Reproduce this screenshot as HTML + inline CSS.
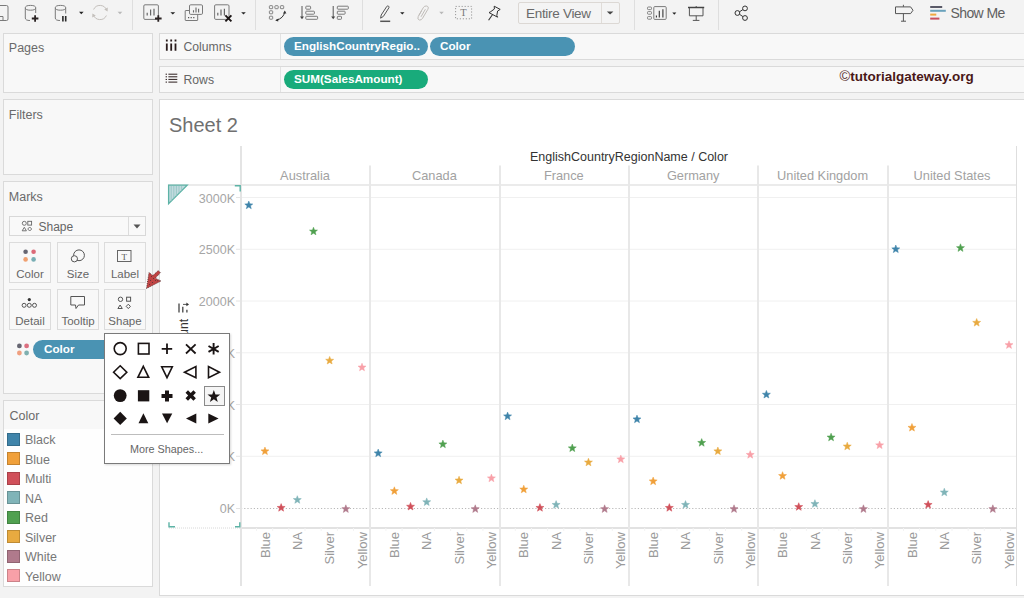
<!DOCTYPE html>
<html><head><meta charset="utf-8">
<style>
*{box-sizing:border-box;margin:0;padding:0}
html,body{width:1024px;height:598px;overflow:hidden;background:#f3f3f3;font-family:"Liberation Sans",sans-serif;color:#555;position:relative}
.a{position:absolute}
.t{position:absolute;white-space:nowrap;line-height:1}
.sep{position:absolute;top:0;width:1px;height:30px;background:#dedede}
.panel{position:absolute;background:#f8f8f8;border:1px solid #dadada}
.btn{position:absolute;border:1px solid #dcdcdc;background:#f8f8f8;width:42px;height:41px}
.btn .t{font-size:11.5px;color:#666;width:100%;text-align:center;left:0;top:26px}
.pill{position:absolute;border-radius:10px;color:#fff;font-weight:bold;font-size:11.7px;line-height:17.6px;height:19px;padding-left:10px;white-space:nowrap}
.sw{position:absolute;left:7px;width:13px;height:13px;box-shadow:inset 0 0 0 1px rgba(0,0,0,0.18)}
.lg{position:absolute;left:25px;font-size:12.5px;color:#777;line-height:1;white-space:nowrap}
svg{position:absolute;overflow:visible}
.ch{top:170px;font-size:12.8px;color:#a2a2a2;text-align:center}
.xl{top:532px;font-size:13px;color:#9a9a9a;transform-origin:0 0;transform:rotate(-90deg) translate(-100%,-50%);text-align:right}
.yl{left:135px;width:100px;text-align:right;font-size:12.5px;color:#a6a6a6}
</style></head><body>

<!-- toolbar -->
<div class="a" style="left:0;top:0;width:1024px;height:31px;background:#f3f3f3"></div>
<div class="sep" style="left:132px"></div>
<div class="sep" style="left:255px"></div>
<div class="sep" style="left:362px"></div>
<div class="sep" style="left:634px"></div>
<div class="sep" style="left:718px"></div>


<!-- toolbar icons -->
<svg style="left:0;top:0" width="1" height="1" fill="none" stroke="#7a7a7a" stroke-width="1">
<!-- save partial -->
<path d="M-2,5.5 H6.5 Q8,5.5 8,7 V19 Q8,20.5 6.5,20.5 H-2"/>
<path d="M-2,16.5 H3 V20.5"/>
<!-- cylinder + -->
<ellipse cx="30.5" cy="7.8" rx="5.2" ry="2.4"/>
<path d="M25.3,7.8 V18 Q25.3,20.5 30,20.5 M35.7,7.8 V13"/>
<path d="M31.8,18.5 H38.4 M35.1,15.2 V21.8" stroke="#2a2222" stroke-width="1.8"/>
<!-- cylinder pause -->
<ellipse cx="60.5" cy="7.8" rx="5.2" ry="2.4"/>
<path d="M55.3,7.8 V18 Q55.3,20.5 60,20.5 M65.7,7.8 V13.5"/>
<path d="M62.9,16 V21.5 M65.7,16 V21.5" stroke="#2a2a2a" stroke-width="1.6"/>
<!-- refresh -->
<path d="M93.6,9.5 A7,7 0 0 1 106.6,10.2 M106.4,15.5 A7,7 0 0 1 93.4,14.8" stroke="#c4c0bc" stroke-width="1"/>
<path d="M104.2,9.4 L107.6,11.4 L107.8,7.6 Z M95.8,15.6 L92.4,13.6 L92.2,17.4 Z" fill="#c4c0bc" stroke="none"/>
<!-- new worksheet -->
<rect x="143.8" y="4.8" width="14.6" height="14.6" rx="1.2"/>
<path d="M147.2,15.6 V12.8 M150.6,15.6 V9.6 M154,15.6 V8.8" stroke="#666" stroke-width="1.2"/>
<path d="M155,18.5 H161.6 M158.3,15.2 V21.8" stroke="#2a2222" stroke-width="1.8"/>
<!-- duplicate -->
<rect x="189.5" y="4.8" width="13" height="9.6" rx="1.2"/>
<path d="M193.5,12.6 V10.3 M196,12.6 V7.6 M198.6,12.6 V8.8" stroke="#666" stroke-width="1.1"/>
<path d="M189,10.5 H185.6 Q185.2,10.5 185.2,11 V20 Q185.2,20.5 185.7,20.5 H197.2 Q197.7,20.5 197.7,20 V14.6"/>
<path d="M188,17.6 H189.2 M190.6,17.6 H191.8 M193.2,17.6 H194.4" stroke="#555" stroke-width="1.2"/>
<!-- clear sheet -->
<rect x="214.6" y="4.8" width="14.4" height="14.6" rx="1.2"/>
<path d="M217.8,15.6 V12.8 M221,15.6 V9.6 M224.4,15.6 V8.8" stroke="#666" stroke-width="1.2"/>
<path d="M225.4,15.4 L231.4,21.4 M231.4,15.4 L225.4,21.4" stroke="#1a1414" stroke-width="1.9"/>
<!-- swap -->
<g stroke="#777" stroke-width="0.9">
<rect x="269.4" y="5.7" width="3.3" height="3" rx="0.6"/><rect x="274.9" y="5.7" width="3.3" height="3" rx="0.6"/><rect x="280.4" y="5.7" width="3.3" height="3" rx="0.6"/>
<rect x="269.4" y="10.8" width="3.3" height="3" rx="0.6"/><rect x="269.4" y="16.2" width="3.3" height="3" rx="0.6"/>
</g>
<path d="M276.2,20.2 Q283.5,18.5 284.8,11.8" stroke="#333" stroke-width="1"/>
<path d="M284.8,10.6 L283,13.6 L286.4,13.4 Z M275.2,20.6 L278.4,18.6 L278.2,21.6 Z" fill="#333" stroke="none"/>
<!-- sort asc -->
<path d="M302,6 V18" stroke="#555"/><path d="M300,16.4 L302,19.2 L304,16.4 Z" fill="#444" stroke="none"/>
<rect x="305.8" y="6.2" width="4.8" height="3" rx="0.7"/><rect x="305.8" y="11.2" width="8.6" height="3" rx="0.7"/><rect x="305.8" y="16.3" width="11.8" height="3" rx="0.7"/>
<!-- sort desc -->
<path d="M333.2,6 V18" stroke="#555"/><path d="M331.2,16.4 L333.2,19.2 L335.2,16.4 Z" fill="#444" stroke="none"/>
<rect x="337.3" y="6.2" width="11" height="3" rx="0.7"/><rect x="337.3" y="11.2" width="7.8" height="3" rx="0.7"/><rect x="337.3" y="16.3" width="4.2" height="3" rx="0.7"/>
<!-- pencil -->
<path d="M380.6,18.2 L381.2,15 L386.8,6.4 Q387.6,5.6 388.6,6.2 Q389.4,6.9 388.9,7.8 L383.4,16.4 Z" stroke="#555" stroke-width="1"/>
<path d="M380.2,21.3 H390.2" stroke="#555" stroke-width="1.5"/>
<!-- paperclip -->
<path d="M421.5,11 L418.2,16.6 Q417,19.4 419.4,20 Q421.4,20.4 422.6,18.2 L427.8,9.4 Q429.2,6.6 426.6,6 Q424.4,5.6 423.2,7.8 L418.8,15.4 M425.4,9.2 L421,16.8" stroke="#c0bcb8" stroke-width="1"/>
<!-- text box -->
<rect x="455.6" y="6.4" width="16" height="12.4" stroke="#999" stroke-dasharray="1.2,1.8"/>
<text x="463.5" y="16.3" font-family="Liberation Serif" font-size="10.5" fill="#777" stroke="none" text-anchor="middle">T</text>
<!-- pin -->
<path d="M494.2,6.2 L500.2,9.4 L497.6,11 L496.8,15.6 L497.6,17.2 L489,12.6 L490.8,11.6 L494.4,9 Z" stroke="#333" stroke-width="1"/>
<path d="M492.4,14.8 L488.6,20.2" stroke="#333" stroke-width="1.1"/>
<!-- cards -->
<g stroke="#777" stroke-width="0.9">
<rect x="647.5" y="7" width="4" height="2.6" rx="0.8"/><rect x="647.5" y="11.6" width="4" height="2.6" rx="0.8"/><rect x="647.5" y="16.6" width="4" height="2.6" rx="0.8"/>
</g>
<rect x="653.8" y="6.6" width="12.4" height="12.8" rx="1"/>
<path d="M656.4,17.6 V15.6 M659.3,17.6 V10.8 M662.9,17.6 V9.2" stroke="#333" stroke-width="1.1"/>
<!-- presentation -->
<path d="M688,7.5 H704.2" stroke="#444" stroke-width="1.5"/>
<path d="M689.4,8 V15.8 H703 V8" stroke="#555"/>
<path d="M696.2,15.8 V20.4 M692.8,20.4 H699.4 M696.2,6 V7" stroke="#555"/>
<!-- share -->
<circle cx="745" cy="8.4" r="2.4" stroke="#333"/><circle cx="737.4" cy="13" r="2.4" stroke="#333"/><circle cx="745" cy="18" r="2.4" stroke="#333"/>
<path d="M739.5,11.8 L742.9,9.6 M739.5,14.3 L742.9,16.6" stroke="#333"/>
<!-- sign -->
<path d="M903.4,4.8 V6.8 M903.4,13.7 V21.2 M901,21.2 H906" stroke="#555"/>
<path d="M895.5,6.9 H910.6 L913,10.25 L910.6,13.6 H895.5 Z" stroke="#555"/>
</svg>
<svg style="left:0;top:0" width="1" height="1">
<path d="M79,11.8 H83.6 L81.3,14.2 Z" fill="#222"/>
<path d="M117.6,11.8 H122.3 L120,14.2 Z" fill="#b8b8b8"/>
<path d="M170.4,12.3 H175.2 L172.8,14.6 Z" fill="#222"/>
<path d="M241.2,12.3 H245.8 L243.5,14.6 Z" fill="#222"/>
<path d="M400.1,12.3 H404.5 L402.3,14.5 Z" fill="#222"/>
<path d="M439.2,11.8 H443.8 L441.5,14.2 Z" fill="#b8b8b8"/>
<path d="M672.3,12.6 H676.3 L674.3,14.8 Z" fill="#222"/>
<rect x="930.2" y="6" width="12" height="2" fill="#5a5a68"/>
<rect x="930.2" y="9.8" width="15.6" height="2" fill="#6aa2bc"/>
<rect x="930.2" y="13.6" width="6.1" height="2" fill="#f0a840"/>
<rect x="930.2" y="17.6" width="9.2" height="2" fill="#c85060"/>
</svg>
<div class="a" style="left:518px;top:2px;width:102px;height:22px;border:1px solid #dcd8d4;border-radius:2px;background:#f4f4f4"></div>
<div class="a" style="left:601px;top:3px;width:1px;height:20px;background:#e0dcd8"></div>
<svg style="left:0;top:0" width="1" height="1"><path d="M606.8,11.4 H613.4 L610.1,14.6 Z" fill="#444"/></svg>
<div class="t" style="left:526px;top:6.5px;font-size:13.5px;letter-spacing:-0.3px;color:#6a6a6a">Entire View</div>
<div class="t" style="left:950.5px;top:5.5px;font-size:14px;letter-spacing:-0.6px;color:#606060">Show Me</div>

<!-- left panels -->
<div class="panel" style="left:3px;top:33px;width:150px;height:60px"><div class="t" style="left:4.8px;top:8px;font-size:12.5px;color:#6a6a6a">Pages</div></div>
<div class="panel" style="left:3px;top:99px;width:150px;height:76px"><div class="t" style="left:4.8px;top:8.5px;font-size:12.5px;color:#6a6a6a">Filters</div></div>
<div class="panel" style="left:3px;top:181px;width:150px;height:213px"><div class="t" style="left:4.8px;top:9px;font-size:12.5px;color:#6a6a6a">Marks</div></div>
<!-- marks dropdown -->
<div class="a" style="left:9px;top:216px;width:137px;height:20px;border:1px solid #d8d8d8;background:#f9f9f9"></div>
<div class="a" style="left:128px;top:217px;width:1px;height:18px;background:#dcdcdc"></div>
<svg style="left:0;top:0" width="1" height="1"><path d="M133.5,224.5 L140.5,224.5 L137,228.5 Z" fill="#555"/></svg>
<svg style="left:1px;top:0" width="1" height="1" fill="none" stroke="#666" stroke-width="0.9">
<circle cx="23.3" cy="223.3" r="2"/><rect x="26.8" y="221.3" width="3.8" height="3.8"/>
<path d="M21.2,230.8 L23.3,227.3 L25.4,230.8 Z"/><path d="M28.7,227 L30.7,229 L28.7,231 L26.7,229 Z"/>
</svg>
<div class="t" style="left:38.5px;top:220.5px;font-size:12px;color:#666">Shape</div>
<!-- mark buttons -->
<div class="btn" style="left:9px;top:242px"><div class="t">Color</div></div>
<div class="btn" style="left:57px;top:242px"><div class="t">Size</div></div>
<div class="btn" style="left:104px;top:242px"><div class="t">Label</div></div>
<div class="btn" style="left:9px;top:289px"><div class="t">Detail</div></div>
<div class="btn" style="left:57px;top:289px"><div class="t">Tooltip</div></div>
<div class="btn" style="left:104px;top:289px"><div class="t">Shape</div></div>
<svg style="left:0;top:0" width="1" height="1">
<circle cx="25.6" cy="251.8" r="2.3" fill="#666672"/><circle cx="33.6" cy="251.8" r="2.3" fill="#dc6a78"/>
<circle cx="25.6" cy="259.4" r="2.3" fill="#f0a070"/><circle cx="33.6" cy="259.4" r="2.3" fill="#78aeb4"/>
<g fill="none" stroke="#555" stroke-width="1">
<circle cx="79" cy="255.3" r="5.4"/><circle cx="74.4" cy="258.8" r="3.1" fill="#f8f8f8"/>
<rect x="117.5" y="250.5" width="13.5" height="11" stroke="#666"/>
<circle cx="24.1" cy="305.3" r="2"/><circle cx="29.3" cy="305.3" r="2"/><circle cx="34.5" cy="305.3" r="2"/>
<path d="M70.8,296.5 H84.5 V305 H78.5 L76,308.5 L75.5,305 H70.8 Z"/>
<circle cx="120.5" cy="299.3" r="2.2"/><rect x="126.6" y="297.2" width="4" height="4"/>
<path d="M117.9,308.5 L120.1,305 L122.3,308.5 Z"/><path d="M128.3,304.2 L130.4,306.4 L128.3,308.6 L126.2,306.4 Z"/>
</g>
<circle cx="29.3" cy="299.6" r="1.6" fill="#333"/>
<text x="124.2" y="259.8" font-family="Liberation Serif" font-size="9" fill="#555" text-anchor="middle">T</text>
</svg>
<!-- color pill on marks -->
<svg style="left:0;top:0" width="1" height="1">
<circle cx="19.4" cy="345.9" r="2.4" fill="#666672"/><circle cx="26.6" cy="345.9" r="2.4" fill="#dc7080"/>
<circle cx="19.4" cy="353" r="2.4" fill="#f0a080"/><circle cx="26.6" cy="353" r="2.4" fill="#80b0b0"/>
</svg>
<div class="pill" style="left:33px;top:340px;width:95px;background:#4a93b3;padding-left:11px">Color</div>
<div class="panel" style="left:3px;top:400px;width:150px;height:187px;background:#fefefe"></div>
<div class="a" style="left:4px;top:401px;width:148px;height:28px;background:#f8f8f8"></div>
<div class="t" style="left:9.5px;top:409.5px;font-size:12.5px;color:#6a6a6a">Color</div>
<div class="sw" style="top:432.5px;background:#3f84aa"></div><div class="lg" style="top:434.0px">Black</div><div class="sw" style="top:452.0px;background:#f0a03a"></div><div class="lg" style="top:453.5px">Blue</div><div class="sw" style="top:471.5px;background:#d0505a"></div><div class="lg" style="top:473.0px">Multi</div><div class="sw" style="top:491.0px;background:#80b4b8"></div><div class="lg" style="top:492.5px">NA</div><div class="sw" style="top:510.5px;background:#50a050"></div><div class="lg" style="top:512.0px">Red</div><div class="sw" style="top:530.0px;background:#e8aa40"></div><div class="lg" style="top:531.5px">Silver</div><div class="sw" style="top:549.5px;background:#b07a8c"></div><div class="lg" style="top:551.0px">White</div><div class="sw" style="top:569.0px;background:#f8a0a8"></div><div class="lg" style="top:570.5px">Yellow</div>

<!-- shelves -->
<div class="panel" style="left:159px;top:33px;width:865px;height:27px;border-right:none"></div>
<div class="panel" style="left:159px;top:66px;width:865px;height:27px;border-right:none"></div>
<div class="a" style="left:280px;top:34px;width:1px;height:25px;background:#e2e2e2"></div>
<div class="a" style="left:280px;top:67px;width:1px;height:25px;background:#e2e2e2"></div>
<svg style="left:0;top:0" width="1" height="1">
<path d="M166.8,43.4 V50.8 M171.2,43.4 V50.8 M175.5,43.4 V50.8 M166.8,39.6 V41.6 M171.2,39.6 V41.6 M175.5,39.6 V41.6" stroke="#2a1c1c" stroke-width="1.8"/>
<path d="M168.4,74.2 H177.3 M168.4,76.8 H177.3 M168.4,79.4 H177.3 M168.4,82.1 H177.3 M165.6,74.2 H167 M165.6,76.8 H167 M165.6,79.4 H167 M165.6,82.1 H167" stroke="#2a1c1c" stroke-width="1"/>
</svg>
<div class="t" style="left:183.5px;top:41px;font-size:12.2px;color:#666">Columns</div>
<div class="t" style="left:183.5px;top:74px;font-size:12.2px;color:#666">Rows</div>
<div class="pill" style="left:284px;top:37px;width:144px;background:#4a93b3">EnglishCountryRegio..</div>
<div class="pill" style="left:430px;top:37px;width:145px;background:#4a93b3">Color</div>
<div class="pill" style="left:284px;top:70px;width:144px;background:#19ab7b">SUM(SalesAmount)</div>
<div class="t" style="left:839.5px;top:68.5px;font-size:13.5px;font-weight:bold;color:#4a1818"><span style="font-weight:normal;font-size:14.5px;color:#5a3030">©</span>tutorialgateway.org</div>

<!-- sheet -->
<div class="a" style="left:159px;top:99px;width:865px;height:497px;background:#fff;border:1px solid #dadada;border-right:none"></div>
<div class="t" style="left:169px;top:114.5px;font-size:20px;color:#707070">Sheet 2</div>
<svg class="a" style="left:0;top:0" width="1024" height="598" viewBox="0 0 1024 598">
<line x1="242" y1="197.5" x2="1016" y2="197.5" stroke="#f0f0f0" stroke-width="1"/>
<line x1="236" y1="197.5" x2="240" y2="197.5" stroke="#e4e4e4" stroke-width="1"/>
<line x1="242" y1="249.25" x2="1016" y2="249.25" stroke="#f0f0f0" stroke-width="1"/>
<line x1="236" y1="249.25" x2="240" y2="249.25" stroke="#e4e4e4" stroke-width="1"/>
<line x1="242" y1="301" x2="1016" y2="301" stroke="#f0f0f0" stroke-width="1"/>
<line x1="236" y1="301" x2="240" y2="301" stroke="#e4e4e4" stroke-width="1"/>
<line x1="242" y1="352.75" x2="1016" y2="352.75" stroke="#f0f0f0" stroke-width="1"/>
<line x1="236" y1="352.75" x2="240" y2="352.75" stroke="#e4e4e4" stroke-width="1"/>
<line x1="242" y1="404.5" x2="1016" y2="404.5" stroke="#f0f0f0" stroke-width="1"/>
<line x1="236" y1="404.5" x2="240" y2="404.5" stroke="#e4e4e4" stroke-width="1"/>
<line x1="242" y1="456.25" x2="1016" y2="456.25" stroke="#f0f0f0" stroke-width="1"/>
<line x1="236" y1="456.25" x2="240" y2="456.25" stroke="#e4e4e4" stroke-width="1"/>
<line x1="241" y1="508.5" x2="1017" y2="508.5" stroke="#b8b8b8" stroke-width="1" stroke-dasharray="1.2,2"/>
<line x1="236" y1="508.5" x2="240" y2="508.5" stroke="#e4e4e4" stroke-width="1"/>
<line x1="168" y1="185" x2="1017" y2="185" stroke="#ebebeb" stroke-width="2"/>
<line x1="241" y1="528" x2="1017" y2="528" stroke="#e2e2e2" stroke-width="2"/>
<line x1="169" y1="528" x2="240" y2="528" stroke="#d8d8d8" stroke-width="1" stroke-dasharray="1,1"/>
<line x1="241" y1="146" x2="241" y2="586" stroke="#e4e4e4" stroke-width="2"/>
<line x1="1016.5" y1="146" x2="1016.5" y2="586" stroke="#dedede" stroke-width="1"/>
<line x1="370" y1="165.5" x2="370" y2="586" stroke="#e8e8e8" stroke-width="2"/>
<line x1="500" y1="165.5" x2="500" y2="586" stroke="#e8e8e8" stroke-width="2"/>
<line x1="629" y1="165.5" x2="629" y2="586" stroke="#e8e8e8" stroke-width="2"/>
<line x1="758" y1="165.5" x2="758" y2="586" stroke="#e8e8e8" stroke-width="2"/>
<line x1="888" y1="165.5" x2="888" y2="586" stroke="#e8e8e8" stroke-width="2"/>
<polygon points="168.6,185.2 187.2,185.2 168.6,203.6" fill="#c2dadf" stroke="#5db3a6" stroke-width="1.3"/>
<line x1="171.2" y1="186" x2="171.2" y2="201.0" stroke="#8fc5c0" stroke-width="0.8"/>
<line x1="173.8" y1="186" x2="173.8" y2="198.4" stroke="#8fc5c0" stroke-width="0.8"/>
<line x1="176.4" y1="186" x2="176.4" y2="195.8" stroke="#8fc5c0" stroke-width="0.8"/>
<line x1="179" y1="186" x2="179" y2="193.2" stroke="#8fc5c0" stroke-width="0.8"/>
<line x1="181.6" y1="186" x2="181.6" y2="190.6" stroke="#8fc5c0" stroke-width="0.8"/>
<path d="M234.8,185.7 H240.2 V191.4" fill="none" stroke="#5db3a6" stroke-width="1.4"/>
<path d="M169,522.3 V526.7 H175" fill="none" stroke="#5db3a6" stroke-width="1.4"/>
<path d="M235,526.7 H239.8 V522.3" fill="none" stroke="#5db3a6" stroke-width="1.4"/>
<path d="M179,303.4 V312.6 M182.8,306.7 V312.6 M186.9,309.7 V312.6" stroke="#444" stroke-width="1.3"/>
<path d="M183,304.4 H187" stroke="#444" stroke-width="0.9"/><path d="M186.4,302.6 L189,304.4 L186.4,306.2 Z" fill="#333"/>
<line x1="256.5" y1="528" x2="256.5" y2="531" stroke="#f3f3f3" stroke-width="1"/>
<line x1="272.7" y1="528" x2="272.7" y2="531" stroke="#f3f3f3" stroke-width="1"/>
<line x1="288.8" y1="528" x2="288.8" y2="531" stroke="#f3f3f3" stroke-width="1"/>
<line x1="305.0" y1="528" x2="305.0" y2="531" stroke="#f3f3f3" stroke-width="1"/>
<line x1="321.2" y1="528" x2="321.2" y2="531" stroke="#f3f3f3" stroke-width="1"/>
<line x1="337.4" y1="528" x2="337.4" y2="531" stroke="#f3f3f3" stroke-width="1"/>
<line x1="353.5" y1="528" x2="353.5" y2="531" stroke="#f3f3f3" stroke-width="1"/>
<line x1="385.9" y1="528" x2="385.9" y2="531" stroke="#f3f3f3" stroke-width="1"/>
<line x1="402.1" y1="528" x2="402.1" y2="531" stroke="#f3f3f3" stroke-width="1"/>
<line x1="418.2" y1="528" x2="418.2" y2="531" stroke="#f3f3f3" stroke-width="1"/>
<line x1="434.4" y1="528" x2="434.4" y2="531" stroke="#f3f3f3" stroke-width="1"/>
<line x1="450.6" y1="528" x2="450.6" y2="531" stroke="#f3f3f3" stroke-width="1"/>
<line x1="466.8" y1="528" x2="466.8" y2="531" stroke="#f3f3f3" stroke-width="1"/>
<line x1="482.9" y1="528" x2="482.9" y2="531" stroke="#f3f3f3" stroke-width="1"/>
<line x1="515.3" y1="528" x2="515.3" y2="531" stroke="#f3f3f3" stroke-width="1"/>
<line x1="531.5" y1="528" x2="531.5" y2="531" stroke="#f3f3f3" stroke-width="1"/>
<line x1="547.6" y1="528" x2="547.6" y2="531" stroke="#f3f3f3" stroke-width="1"/>
<line x1="563.8" y1="528" x2="563.8" y2="531" stroke="#f3f3f3" stroke-width="1"/>
<line x1="580.0" y1="528" x2="580.0" y2="531" stroke="#f3f3f3" stroke-width="1"/>
<line x1="596.2" y1="528" x2="596.2" y2="531" stroke="#f3f3f3" stroke-width="1"/>
<line x1="612.3" y1="528" x2="612.3" y2="531" stroke="#f3f3f3" stroke-width="1"/>
<line x1="644.7" y1="528" x2="644.7" y2="531" stroke="#f3f3f3" stroke-width="1"/>
<line x1="660.9" y1="528" x2="660.9" y2="531" stroke="#f3f3f3" stroke-width="1"/>
<line x1="677.0" y1="528" x2="677.0" y2="531" stroke="#f3f3f3" stroke-width="1"/>
<line x1="693.2" y1="528" x2="693.2" y2="531" stroke="#f3f3f3" stroke-width="1"/>
<line x1="709.4" y1="528" x2="709.4" y2="531" stroke="#f3f3f3" stroke-width="1"/>
<line x1="725.5" y1="528" x2="725.5" y2="531" stroke="#f3f3f3" stroke-width="1"/>
<line x1="741.7" y1="528" x2="741.7" y2="531" stroke="#f3f3f3" stroke-width="1"/>
<line x1="774.1" y1="528" x2="774.1" y2="531" stroke="#f3f3f3" stroke-width="1"/>
<line x1="790.3" y1="528" x2="790.3" y2="531" stroke="#f3f3f3" stroke-width="1"/>
<line x1="806.4" y1="528" x2="806.4" y2="531" stroke="#f3f3f3" stroke-width="1"/>
<line x1="822.6" y1="528" x2="822.6" y2="531" stroke="#f3f3f3" stroke-width="1"/>
<line x1="838.8" y1="528" x2="838.8" y2="531" stroke="#f3f3f3" stroke-width="1"/>
<line x1="855.0" y1="528" x2="855.0" y2="531" stroke="#f3f3f3" stroke-width="1"/>
<line x1="871.1" y1="528" x2="871.1" y2="531" stroke="#f3f3f3" stroke-width="1"/>
<line x1="903.5" y1="528" x2="903.5" y2="531" stroke="#f3f3f3" stroke-width="1"/>
<line x1="919.6" y1="528" x2="919.6" y2="531" stroke="#f3f3f3" stroke-width="1"/>
<line x1="935.8" y1="528" x2="935.8" y2="531" stroke="#f3f3f3" stroke-width="1"/>
<line x1="952.0" y1="528" x2="952.0" y2="531" stroke="#f3f3f3" stroke-width="1"/>
<line x1="968.2" y1="528" x2="968.2" y2="531" stroke="#f3f3f3" stroke-width="1"/>
<line x1="984.3" y1="528" x2="984.3" y2="531" stroke="#f3f3f3" stroke-width="1"/>
<line x1="1000.5" y1="528" x2="1000.5" y2="531" stroke="#f3f3f3" stroke-width="1"/>
<polygon points="248.79,201.10 249.85,203.84 252.78,204.00 250.50,205.86 251.26,208.70 248.79,207.10 246.32,208.70 247.08,205.86 244.79,204.00 247.73,203.84" fill="#3f84aa" stroke="#3f84aa" stroke-width="0.5" stroke-linejoin="miter"/>
<polygon points="264.96,447.00 266.02,449.74 268.96,449.90 266.67,451.76 267.43,454.60 264.96,453.00 262.49,454.60 263.25,451.76 260.97,449.90 263.90,449.74" fill="#f0a03a" stroke="#f0a03a" stroke-width="0.5" stroke-linejoin="miter"/>
<polygon points="281.14,503.60 282.20,506.34 285.13,506.50 282.85,508.36 283.61,511.20 281.14,509.60 278.67,511.20 279.43,508.36 277.14,506.50 280.08,506.34" fill="#d0505a" stroke="#d0505a" stroke-width="0.5" stroke-linejoin="miter"/>
<polygon points="297.31,495.70 298.37,498.44 301.31,498.60 299.02,500.46 299.78,503.30 297.31,501.70 294.84,503.30 295.60,500.46 293.32,498.60 296.25,498.44" fill="#80b4b8" stroke="#80b4b8" stroke-width="0.5" stroke-linejoin="miter"/>
<polygon points="313.49,227.20 314.55,229.94 317.48,230.10 315.20,231.96 315.96,234.80 313.49,233.20 311.02,234.80 311.78,231.96 309.49,230.10 312.43,229.94" fill="#50a050" stroke="#50a050" stroke-width="0.5" stroke-linejoin="miter"/>
<polygon points="329.66,356.40 330.72,359.14 333.66,359.30 331.37,361.16 332.13,364.00 329.66,362.40 327.19,364.00 327.95,361.16 325.67,359.30 328.60,359.14" fill="#e8aa40" stroke="#e8aa40" stroke-width="0.5" stroke-linejoin="miter"/>
<polygon points="345.84,504.80 346.90,507.54 349.83,507.70 347.55,509.56 348.31,512.40 345.84,510.80 343.37,512.40 344.13,509.56 341.84,507.70 344.78,507.54" fill="#b07a8c" stroke="#b07a8c" stroke-width="0.5" stroke-linejoin="miter"/>
<polygon points="362.01,363.20 363.07,365.94 366.01,366.10 363.72,367.96 364.48,370.80 362.01,369.20 359.54,370.80 360.30,367.96 358.02,366.10 360.95,365.94" fill="#f8a0a8" stroke="#f8a0a8" stroke-width="0.5" stroke-linejoin="miter"/>
<polygon points="378.19,449.10 379.25,451.84 382.18,452.00 379.90,453.86 380.66,456.70 378.19,455.10 375.72,456.70 376.48,453.86 374.19,452.00 377.13,451.84" fill="#3f84aa" stroke="#3f84aa" stroke-width="0.5" stroke-linejoin="miter"/>
<polygon points="394.36,486.80 395.42,489.54 398.36,489.70 396.07,491.56 396.83,494.40 394.36,492.80 391.89,494.40 392.65,491.56 390.37,489.70 393.30,489.54" fill="#f0a03a" stroke="#f0a03a" stroke-width="0.5" stroke-linejoin="miter"/>
<polygon points="410.54,502.40 411.60,505.14 414.53,505.30 412.25,507.16 413.01,510.00 410.54,508.40 408.07,510.00 408.83,507.16 406.54,505.30 409.48,505.14" fill="#d0505a" stroke="#d0505a" stroke-width="0.5" stroke-linejoin="miter"/>
<polygon points="426.71,497.90 427.77,500.64 430.71,500.80 428.42,502.66 429.18,505.50 426.71,503.90 424.24,505.50 425.00,502.66 422.72,500.80 425.65,500.64" fill="#80b4b8" stroke="#80b4b8" stroke-width="0.5" stroke-linejoin="miter"/>
<polygon points="442.89,440.10 443.95,442.84 446.88,443.00 444.60,444.86 445.36,447.70 442.89,446.10 440.42,447.70 441.18,444.86 438.89,443.00 441.83,442.84" fill="#50a050" stroke="#50a050" stroke-width="0.5" stroke-linejoin="miter"/>
<polygon points="459.06,476.20 460.12,478.94 463.06,479.10 460.77,480.96 461.53,483.80 459.06,482.20 456.59,483.80 457.35,480.96 455.07,479.10 458.00,478.94" fill="#e8aa40" stroke="#e8aa40" stroke-width="0.5" stroke-linejoin="miter"/>
<polygon points="475.24,504.80 476.30,507.54 479.23,507.70 476.95,509.56 477.71,512.40 475.24,510.80 472.77,512.40 473.53,509.56 471.24,507.70 474.18,507.54" fill="#b07a8c" stroke="#b07a8c" stroke-width="0.5" stroke-linejoin="miter"/>
<polygon points="491.41,474.10 492.47,476.84 495.41,477.00 493.12,478.86 493.88,481.70 491.41,480.10 488.94,481.70 489.70,478.86 487.42,477.00 490.35,476.84" fill="#f8a0a8" stroke="#f8a0a8" stroke-width="0.5" stroke-linejoin="miter"/>
<polygon points="507.59,412.10 508.65,414.84 511.58,415.00 509.30,416.86 510.06,419.70 507.59,418.10 505.12,419.70 505.88,416.86 503.59,415.00 506.53,414.84" fill="#3f84aa" stroke="#3f84aa" stroke-width="0.5" stroke-linejoin="miter"/>
<polygon points="523.76,485.20 524.82,487.94 527.76,488.10 525.47,489.96 526.23,492.80 523.76,491.20 521.29,492.80 522.05,489.96 519.77,488.10 522.70,487.94" fill="#f0a03a" stroke="#f0a03a" stroke-width="0.5" stroke-linejoin="miter"/>
<polygon points="539.94,503.60 541.00,506.34 543.93,506.50 541.65,508.36 542.41,511.20 539.94,509.60 537.47,511.20 538.23,508.36 535.94,506.50 538.88,506.34" fill="#d0505a" stroke="#d0505a" stroke-width="0.5" stroke-linejoin="miter"/>
<polygon points="556.11,500.60 557.17,503.34 560.11,503.50 557.82,505.36 558.58,508.20 556.11,506.60 553.64,508.20 554.40,505.36 552.12,503.50 555.05,503.34" fill="#80b4b8" stroke="#80b4b8" stroke-width="0.5" stroke-linejoin="miter"/>
<polygon points="572.29,444.00 573.35,446.74 576.28,446.90 574.00,448.76 574.76,451.60 572.29,450.00 569.82,451.60 570.58,448.76 568.29,446.90 571.23,446.74" fill="#50a050" stroke="#50a050" stroke-width="0.5" stroke-linejoin="miter"/>
<polygon points="588.46,458.20 589.52,460.94 592.46,461.10 590.17,462.96 590.93,465.80 588.46,464.20 585.99,465.80 586.75,462.96 584.47,461.10 587.40,460.94" fill="#e8aa40" stroke="#e8aa40" stroke-width="0.5" stroke-linejoin="miter"/>
<polygon points="604.64,504.80 605.70,507.54 608.63,507.70 606.35,509.56 607.11,512.40 604.64,510.80 602.17,512.40 602.93,509.56 600.64,507.70 603.58,507.54" fill="#b07a8c" stroke="#b07a8c" stroke-width="0.5" stroke-linejoin="miter"/>
<polygon points="620.81,455.10 621.87,457.84 624.81,458.00 622.52,459.86 623.28,462.70 620.81,461.10 618.34,462.70 619.10,459.86 616.82,458.00 619.75,457.84" fill="#f8a0a8" stroke="#f8a0a8" stroke-width="0.5" stroke-linejoin="miter"/>
<polygon points="636.99,415.10 638.05,417.84 640.98,418.00 638.70,419.86 639.46,422.70 636.99,421.10 634.52,422.70 635.28,419.86 632.99,418.00 635.93,417.84" fill="#3f84aa" stroke="#3f84aa" stroke-width="0.5" stroke-linejoin="miter"/>
<polygon points="653.16,477.10 654.22,479.84 657.16,480.00 654.87,481.86 655.63,484.70 653.16,483.10 650.69,484.70 651.45,481.86 649.17,480.00 652.10,479.84" fill="#f0a03a" stroke="#f0a03a" stroke-width="0.5" stroke-linejoin="miter"/>
<polygon points="669.34,503.60 670.40,506.34 673.33,506.50 671.05,508.36 671.81,511.20 669.34,509.60 666.87,511.20 667.63,508.36 665.34,506.50 668.28,506.34" fill="#d0505a" stroke="#d0505a" stroke-width="0.5" stroke-linejoin="miter"/>
<polygon points="685.51,500.60 686.57,503.34 689.51,503.50 687.22,505.36 687.98,508.20 685.51,506.60 683.04,508.20 683.80,505.36 681.52,503.50 684.45,503.34" fill="#80b4b8" stroke="#80b4b8" stroke-width="0.5" stroke-linejoin="miter"/>
<polygon points="701.69,438.60 702.75,441.34 705.68,441.50 703.40,443.36 704.16,446.20 701.69,444.60 699.22,446.20 699.98,443.36 697.69,441.50 700.63,441.34" fill="#50a050" stroke="#50a050" stroke-width="0.5" stroke-linejoin="miter"/>
<polygon points="717.86,447.00 718.92,449.74 721.86,449.90 719.57,451.76 720.33,454.60 717.86,453.00 715.39,454.60 716.15,451.76 713.87,449.90 716.80,449.74" fill="#e8aa40" stroke="#e8aa40" stroke-width="0.5" stroke-linejoin="miter"/>
<polygon points="734.04,504.80 735.10,507.54 738.03,507.70 735.75,509.56 736.51,512.40 734.04,510.80 731.57,512.40 732.33,509.56 730.04,507.70 732.98,507.54" fill="#b07a8c" stroke="#b07a8c" stroke-width="0.5" stroke-linejoin="miter"/>
<polygon points="750.21,450.60 751.27,453.34 754.21,453.50 751.92,455.36 752.68,458.20 750.21,456.60 747.74,458.20 748.50,455.36 746.22,453.50 749.15,453.34" fill="#f8a0a8" stroke="#f8a0a8" stroke-width="0.5" stroke-linejoin="miter"/>
<polygon points="766.39,390.40 767.45,393.14 770.38,393.30 768.10,395.16 768.86,398.00 766.39,396.40 763.92,398.00 764.68,395.16 762.39,393.30 765.33,393.14" fill="#3f84aa" stroke="#3f84aa" stroke-width="0.5" stroke-linejoin="miter"/>
<polygon points="782.56,471.70 783.62,474.44 786.56,474.60 784.27,476.46 785.03,479.30 782.56,477.70 780.09,479.30 780.85,476.46 778.57,474.60 781.50,474.44" fill="#f0a03a" stroke="#f0a03a" stroke-width="0.5" stroke-linejoin="miter"/>
<polygon points="798.74,502.70 799.80,505.44 802.73,505.60 800.45,507.46 801.21,510.30 798.74,508.70 796.27,510.30 797.03,507.46 794.74,505.60 797.68,505.44" fill="#d0505a" stroke="#d0505a" stroke-width="0.5" stroke-linejoin="miter"/>
<polygon points="814.91,499.70 815.97,502.44 818.91,502.60 816.62,504.46 817.38,507.30 814.91,505.70 812.44,507.30 813.20,504.46 810.92,502.60 813.85,502.44" fill="#80b4b8" stroke="#80b4b8" stroke-width="0.5" stroke-linejoin="miter"/>
<polygon points="831.09,433.20 832.15,435.94 835.08,436.10 832.80,437.96 833.56,440.80 831.09,439.20 828.62,440.80 829.38,437.96 827.09,436.10 830.03,435.94" fill="#50a050" stroke="#50a050" stroke-width="0.5" stroke-linejoin="miter"/>
<polygon points="847.26,442.20 848.32,444.94 851.26,445.10 848.97,446.96 849.73,449.80 847.26,448.20 844.79,449.80 845.55,446.96 843.27,445.10 846.20,444.94" fill="#e8aa40" stroke="#e8aa40" stroke-width="0.5" stroke-linejoin="miter"/>
<polygon points="863.44,504.80 864.50,507.54 867.43,507.70 865.15,509.56 865.91,512.40 863.44,510.80 860.97,512.40 861.73,509.56 859.44,507.70 862.38,507.54" fill="#b07a8c" stroke="#b07a8c" stroke-width="0.5" stroke-linejoin="miter"/>
<polygon points="879.61,441.00 880.67,443.74 883.61,443.90 881.32,445.76 882.08,448.60 879.61,447.00 877.14,448.60 877.90,445.76 875.62,443.90 878.55,443.74" fill="#f8a0a8" stroke="#f8a0a8" stroke-width="0.5" stroke-linejoin="miter"/>
<polygon points="895.79,245.00 896.85,247.74 899.78,247.90 897.50,249.76 898.26,252.60 895.79,251.00 893.32,252.60 894.08,249.76 891.79,247.90 894.73,247.74" fill="#3f84aa" stroke="#3f84aa" stroke-width="0.5" stroke-linejoin="miter"/>
<polygon points="911.96,423.50 913.02,426.24 915.96,426.40 913.67,428.26 914.43,431.10 911.96,429.50 909.49,431.10 910.25,428.26 907.97,426.40 910.90,426.24" fill="#f0a03a" stroke="#f0a03a" stroke-width="0.5" stroke-linejoin="miter"/>
<polygon points="928.14,500.60 929.20,503.34 932.13,503.50 929.85,505.36 930.61,508.20 928.14,506.60 925.67,508.20 926.43,505.36 924.14,503.50 927.08,503.34" fill="#d0505a" stroke="#d0505a" stroke-width="0.5" stroke-linejoin="miter"/>
<polygon points="944.31,488.20 945.37,490.94 948.31,491.10 946.02,492.96 946.78,495.80 944.31,494.20 941.84,495.80 942.60,492.96 940.32,491.10 943.25,490.94" fill="#80b4b8" stroke="#80b4b8" stroke-width="0.5" stroke-linejoin="miter"/>
<polygon points="960.49,243.80 961.55,246.54 964.48,246.70 962.20,248.56 962.96,251.40 960.49,249.80 958.02,251.40 958.78,248.56 956.49,246.70 959.43,246.54" fill="#50a050" stroke="#50a050" stroke-width="0.5" stroke-linejoin="miter"/>
<polygon points="976.66,318.50 977.72,321.24 980.66,321.40 978.37,323.26 979.13,326.10 976.66,324.50 974.19,326.10 974.95,323.26 972.67,321.40 975.60,321.24" fill="#e8aa40" stroke="#e8aa40" stroke-width="0.5" stroke-linejoin="miter"/>
<polygon points="992.84,504.80 993.90,507.54 996.83,507.70 994.55,509.56 995.31,512.40 992.84,510.80 990.37,512.40 991.13,509.56 988.84,507.70 991.78,507.54" fill="#b07a8c" stroke="#b07a8c" stroke-width="0.5" stroke-linejoin="miter"/>
<polygon points="1009.01,340.80 1010.07,343.54 1013.01,343.70 1010.72,345.56 1011.48,348.40 1009.01,346.80 1006.54,348.40 1007.30,345.56 1005.02,343.70 1007.95,343.54" fill="#f8a0a8" stroke="#f8a0a8" stroke-width="0.5" stroke-linejoin="miter"/>
</svg>
<div class="t" style="left:530px;top:151px;font-size:12.5px;color:#333">EnglishCountryRegionName / Color</div>
<div class="t ch" style="left:245.0px;width:120px">Australia</div>
<div class="t ch" style="left:374.4px;width:120px">Canada</div>
<div class="t ch" style="left:503.8px;width:120px">France</div>
<div class="t ch" style="left:633.2px;width:120px">Germany</div>
<div class="t ch" style="left:762.6px;width:120px">United Kingdom</div>
<div class="t ch" style="left:892.0px;width:120px">United States</div>
<div class="t xl" style="left:264.6px">Blue</div>
<div class="t xl" style="left:296.9px">NA</div>
<div class="t xl" style="left:329.3px">Silver</div>
<div class="t xl" style="left:361.6px">Yellow</div>
<div class="t xl" style="left:394.0px">Blue</div>
<div class="t xl" style="left:426.3px">NA</div>
<div class="t xl" style="left:458.7px">Silver</div>
<div class="t xl" style="left:491.0px">Yellow</div>
<div class="t xl" style="left:523.4px">Blue</div>
<div class="t xl" style="left:555.7px">NA</div>
<div class="t xl" style="left:588.1px">Silver</div>
<div class="t xl" style="left:620.4px">Yellow</div>
<div class="t xl" style="left:652.8px">Blue</div>
<div class="t xl" style="left:685.1px">NA</div>
<div class="t xl" style="left:717.5px">Silver</div>
<div class="t xl" style="left:749.8px">Yellow</div>
<div class="t xl" style="left:782.2px">Blue</div>
<div class="t xl" style="left:814.5px">NA</div>
<div class="t xl" style="left:846.9px">Silver</div>
<div class="t xl" style="left:879.2px">Yellow</div>
<div class="t xl" style="left:911.6px">Blue</div>
<div class="t xl" style="left:943.9px">NA</div>
<div class="t xl" style="left:976.3px">Silver</div>
<div class="t xl" style="left:1008.6px">Yellow</div>
<div class="t yl" style="top:192.7px">3000K</div>
<div class="t yl" style="top:244.4px">2500K</div>
<div class="t yl" style="top:296.2px">2000K</div>
<div class="t yl" style="top:347.9px">1500K</div>
<div class="t yl" style="top:399.7px">1000K</div>
<div class="t yl" style="top:451.4px">500K</div>
<div class="t yl" style="top:503.2px">0K</div>
<div class="t" style="left:178px;top:519px;width:200px;text-align:right;font-size:12px;color:#333;transform-origin:0 0;transform:rotate(-90deg)">Sales Amount</div>


<!-- red arrow -->
<svg style="left:0;top:0" width="1" height="1">
<path d="M146.5,288.5 L149,272.5 L152.8,275.6 L158.3,270.6 L160.4,272.8 L155.2,278.2 L161,281 Z" fill="#c04444" stroke="#3a2020" stroke-width="0.8" stroke-dasharray="1,1.2"/>
<g fill="#503030"><circle cx="151.5" cy="276.5" r="0.5"/><circle cx="153.5" cy="278.5" r="0.5"/><circle cx="150.5" cy="280.5" r="0.5"/><circle cx="152.5" cy="282.5" r="0.5"/><circle cx="155.5" cy="280.5" r="0.5"/><circle cx="149.5" cy="284.5" r="0.5"/><circle cx="157.5" cy="280.8" r="0.5"/></g>
</svg>
<!-- shape popup -->
<div class="a" style="left:104px;top:333px;width:126px;height:131px;background:#fff;border:1px solid #7a7a7a;box-shadow:1px 1px 2px rgba(0,0,0,0.15)"></div>
<div class="a" style="left:204px;top:386px;width:21px;height:20px;background:#f5f5f5;border:1px solid #8a8a8a"></div>
<div class="a" style="left:111px;top:434px;width:113px;height:1px;background:#bdbdbd"></div>
<div class="t" style="left:130px;top:444px;font-size:10.8px;color:#666">More Shapes...</div>
<svg style="left:0;top:0" width="1" height="1" fill="none" stroke="#1a1414" stroke-width="1.6">
<circle cx="120.2" cy="348.6" r="6"/>
<rect x="138.4" y="343.4" width="10.6" height="10.6"/>
<path d="M161.7,348.8 H172.2 M167,343.6 V354" stroke-width="1.8"/>
<path d="M186,344.3 L195.6,353.5 M195.6,344.3 L186,353.5" stroke-width="1.8"/>
<path d="M213.6,343 V354.6 M208.5,346 L218.7,351.8 M208.5,351.8 L218.7,346" stroke-width="1.9"/>
<path d="M120.2,365.8 L126.8,372.2 L120.2,378.6 L113.6,372.2 Z"/>
<path d="M143.3,366.3 L148.7,377.3 H137.9 Z"/>
<path d="M161.7,366.8 H172.3 L167,377.6 Z"/>
<path d="M184.5,372.2 L195.9,366.6 V377.8 Z"/>
<path d="M219.5,372.2 L208.5,366.6 V377.8 Z"/>
</svg>
<svg style="left:0;top:0" width="1" height="1" fill="#1a1414">
<circle cx="120.2" cy="395.6" r="6.4"/>
<rect x="137.9" y="390.2" width="11.4" height="11.2"/>
<path d="M165,390.6 h4 v3.5 h3.5 v4 h-3.5 v3.5 h-4 v-3.5 h-3.5 v-4 h3.5 Z"/>
<path d="M185.5,392.8 L188,390.3 L190.7,393 L193.4,390.3 L195.9,392.8 L193.2,395.6 L195.9,398.3 L193.4,400.8 L190.7,398.1 L188,400.8 L185.5,398.3 L188.2,395.6 Z"/>
<polygon points="213.85,389.90 215.47,394.38 220.22,394.53 216.47,397.45 217.79,402.02 213.85,399.35 209.91,402.02 211.23,397.45 207.48,394.53 212.23,394.38"/>
<path d="M120.2,411.8 L126.8,418.4 L120.2,425 L113.6,418.4 Z"/>
<path d="M143.4,413.2 L148.3,423.2 H138.5 Z"/>
<path d="M162,413.6 H172.3 L167.1,423.3 Z"/>
<path d="M186,418.5 L196.3,413.6 V423.4 Z"/>
<path d="M218.6,418.5 L208.3,413.6 V423.4 Z"/>
</svg>
</body></html>
